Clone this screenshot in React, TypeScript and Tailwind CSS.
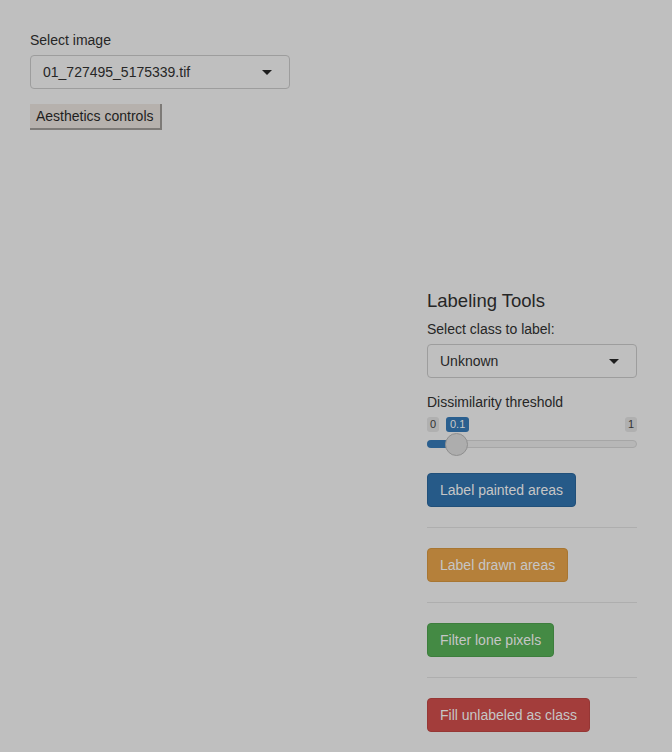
import React from 'react';

const font = { fontFamily: '"Liberation Sans", Arial, sans-serif' };

function Caret() {
    return <span className="w-0 h-0 border-l-[5px] border-r-[5px] border-t-[5px] border-l-transparent border-r-transparent border-t-[#1e1e1e]" />;
}

function SelectBox({ value, width }: { value: string; width: string }) {
    return (
        <div className={`${width} h-[34px] flex items-center justify-between pl-[12px] pr-[17px] border border-[#9d9d9d] rounded-[4px] text-[14px] text-[#262626]`}>
            <span>{value}</span>
            <Caret />
        </div>
    );
}

function ActionButton({ label, color }: { label: string; color: string }) {
    return (
        <div className="flex">
            <button className={`h-[34px] px-[12px] rounded-[4px] text-[14px] text-[#c6c6c6] border ${color}`}>
                {label}
            </button>
        </div>
    );
}

export default function App() {
    return (
        <div className="w-[672px] h-[752px] bg-[#bfbfbf] text-[#262626] overflow-hidden" style={font}>
            <div className="pl-[30px] pt-[30px]">
                <div className="text-[14px] leading-[20px] mb-[5px]">Select image</div>
                <SelectBox value="01_727495_5175339.tif" width="w-[260px]" />
                <div className="flex mt-[15px]">
                    <button className="h-[26px] px-[6px] bg-[#b6b1ad] border-r-2 border-b-2 border-[#7d7a77] text-[14px] text-[#1e1e1e] leading-none">
                        Aesthetics controls
                    </button>
                </div>
            </div>

            <div className="flex justify-end pr-[35px] mt-[160px]">
                <div className="w-[210px] flex flex-col">
                    <h4 className="text-[18.5px] leading-[22px] font-medium text-[#262626]">Labeling Tools</h4>
                    <div className="text-[14px] leading-[20px] mt-[7px] mb-[5px]">Select class to label:</div>
                    <SelectBox value="Unknown" width="w-[210px]" />

                    <div className="text-[14px] leading-[20px] mt-[14px]">Dissimilarity threshold</div>
                    <div className="relative h-[40px] mt-[5px]">
                        <span className="absolute left-0 top-0 h-[15px] px-[3px] rounded-[3px] bg-[#b0b0b0] text-[11px] leading-[15px] text-[#333]">0</span>
                        <span className="absolute left-[19px] top-0 h-[15px] px-[4px] rounded-[3px] bg-[#2a5f8f] text-[11px] leading-[15px] text-[#c8c8c8]">0.1</span>
                        <span className="absolute right-0 top-0 h-[15px] px-[3px] rounded-[3px] bg-[#b0b0b0] text-[11px] leading-[15px] text-[#333]">1</span>
                        <div className="absolute left-0 right-0 top-[23px] h-[8px] rounded-full bg-[#b7b7b7] border border-[#a6a6a6]" />
                        <div className="absolute left-0 w-[30px] top-[23px] h-[8px] rounded-l-full bg-[#2a5f8f]" />
                        <div className="absolute left-[18px] top-[16px] w-[23px] h-[23px] rounded-full bg-[#adadad] border border-[#8f8f8f]" />
                    </div>

                    <div className="mt-[16px]">
                        <ActionButton label="Label painted areas" color="bg-[#265a88] border-[#21507a]" />
                    </div>
                    <hr className="my-[20px] border-t border-[#aeaeae]" />
                    <ActionButton label="Label drawn areas" color="bg-[#b5803a] border-[#a87632]" />
                    <hr className="my-[20px] border-t border-[#aeaeae]" />
                    <ActionButton label="Filter lone pixels" color="bg-[#448a44] border-[#3d7e3d]" />
                    <hr className="my-[20px] border-t border-[#aeaeae]" />
                    <ActionButton label="Fill unlabeled as class" color="bg-[#a33d3b] border-[#963735]" />
                </div>
            </div>
        </div>
    );
}
